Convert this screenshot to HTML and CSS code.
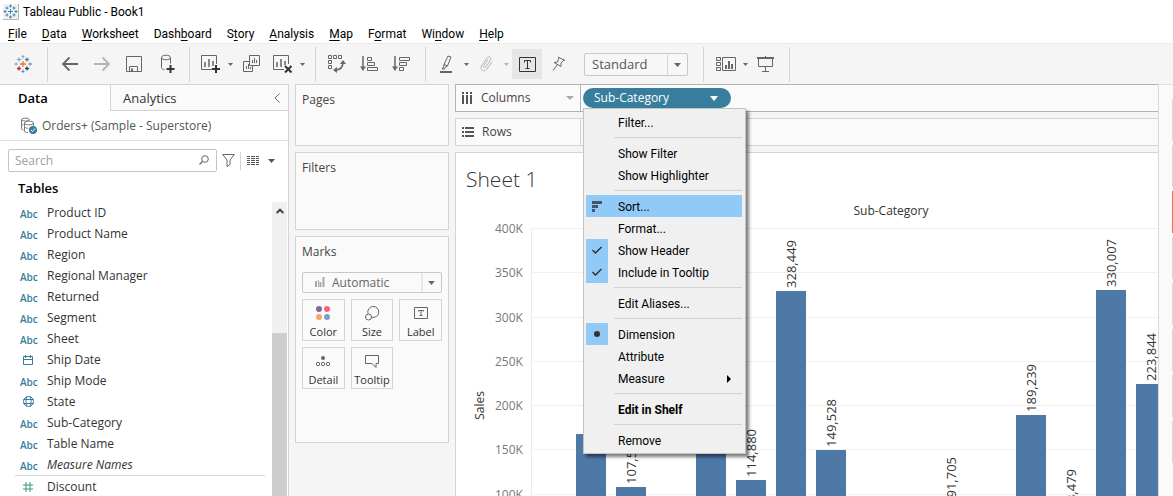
FILE: index.html
```html
<!DOCTYPE html>
<html lang="en">
<head>
<meta charset="utf-8">
<title>Tableau Public - Book1</title>
<link rel="stylesheet" href="styles.css">
</head>
<body>
<div class="app">
  <header class="titlebar">
    <svg class="app-icon" width="16" height="16" viewBox="0 0 16 16"><rect x="0" y="0" width="15" height="15" fill="#f0f0f0"/><path d="M15.500 0v15.500H0" fill="none" stroke="#b5b5b5"/><path d="M7.500 5v5M5 7.500h5M7.500 0.500v3M6 2h3M7.500 11.500v3M6 13h3M2 6v3M0.500 7.500h3M13 6v3M11.500 7.500h3M4 2.500v3M2.500 4h3M11 2.500v3M9.500 4h3M4 9.500v3M2.500 11h3M11 9.500v3M9.500 11h3" fill="none" stroke="#3f86b5"/></svg>
    <span>Tableau Public - Book1</span>
  </header>
  <nav class="menubar">
    <button><u>F</u>ile</button><button><u>D</u>ata</button><button><u>W</u>orksheet</button><button>Dash<u>b</u>oard</button><button>S<u>t</u>ory</button><button><u>A</u>nalysis</button><button><u>M</u>ap</button><button>F<u>o</u>rmat</button><button>Wi<u>n</u>dow</button><button><u>H</u>elp</button>
  </nav>

  <div class="toolbar">
    <div class="tool-group start">
      <button class="tool" aria-label="Start page"><svg width="18" height="18" viewBox="0 0 18 18" fill="none"><path d="M9 6v6M6 9h6" stroke="#e8762d" stroke-width="1.300"/><path d="M5 2.500v4M3 4.500h4" stroke="#6fa3b5"/><path d="M13 2.500v4M11 4.500h4" stroke="#5b7ba0" stroke-width="1.300"/><path d="M5 11.500v4M3 13.500h4" stroke="#c72037" stroke-width="1.300"/><path d="M13 11.500v4M11 13.500h4" stroke="#1f457e" stroke-width="1.300"/><path d="M9 0v3.500M7.500 1.500h3M2 7.500v3M.5 9h3.500" stroke="#7fa7b8"/><path d="M9 14.500V18M7.500 16.500h3M16 7.500v3M14.500 9H18" stroke="#7380a8"/></svg></button>
    </div>
    <div class="tool-group">
      <button class="tool" aria-label="Undo"><svg width="18" height="16" viewBox="0 0 18 16"><path d="M17 8H2M8.500 1.500L2 8l6.500 6.500" fill="none" stroke="#666" stroke-width="1.800"/></svg></button>
      <button class="tool" aria-label="Redo"><svg width="18" height="16" viewBox="0 0 18 16"><path d="M1 8h15M9.500 1.500L16 8l-6.500 6.500" fill="none" stroke="#b5b5b5" stroke-width="1.800"/></svg></button>
      <button class="tool" aria-label="Save"><svg width="16" height="16" viewBox="0 0 16 16" fill="none" stroke="#666"><path d="M.5.500h15v15H.500zM3.500 15v-4.500h8V15" /><path d="M6 12.500v3" stroke-width="2"/></svg></button>
      <button class="tool" aria-label="New data source"><svg width="18" height="20" viewBox="0 0 18 20" fill="none"><path d="M4.500 3.500c0-3 9-3 9 0s-9 3-9 0v10c0 1.500 1.500 2 3 2M13.500 3.500v6" stroke="#666"/><path d="M13.500 11v8M9.500 15h8" stroke="#333" stroke-width="2"/></svg></button>
    </div>
    <div class="tool-group">
      <div class="split"><button class="tool" aria-label="New worksheet"><svg width="20" height="18" viewBox="0 0 20 18" fill="none"><path d="M11 14.500H.5V.500h15V9" stroke="#666"/><path d="M4 7v5M8 4v8M12 6v5" stroke="#666" stroke-width="1.500"/><path d="M15 10v8M11 14h8" stroke="#333" stroke-width="2"/></svg></button><button class="caret" aria-label="New worksheet options"><svg width="5" height="3" viewBox="0 0 5 3"><path d="M0 0h5L2.500 3z" fill="#666"/></svg></button></div>
      <button class="tool" aria-label="Duplicate"><svg width="18" height="18" viewBox="0 0 18 18" fill="none" stroke="#666"><path d="M7.500.500h10v10h-10zM7 6.500H1.500v10h9V11M10.500 8V5M12.500 8V3M14.500 8V5M4.500 14v-3M6.500 14V9M8.500 14v-2"/></svg></button>
      <div class="split"><button class="tool" aria-label="Clear sheet"><svg width="20" height="18" viewBox="0 0 20 18" fill="none"><path d="M11 14.500H.5V.500h15V9" stroke="#666"/><path d="M4 7v5M8 4v8M12 6v4" stroke="#666" stroke-width="1.500"/><path d="M12 11l6.500 6.500M18.500 11L12 17.500" stroke="#333" stroke-width="2"/></svg></button><button class="caret" aria-label="Clear options"><svg width="5" height="3" viewBox="0 0 5 3"><path d="M0 0h5L2.500 3z" fill="#666"/></svg></button></div>
    </div>
    <div class="tool-group">
      <button class="tool" aria-label="Swap rows and columns"><svg width="18" height="18" viewBox="0 0 18 18" fill="none" stroke="#666"><path d="M.5.500h3v3h-3zM5.500.500h3v3h-3zM10.500.500h3v3h-3zM.5 5.500h3v3h-3zM.5 10.500h3v3h-3z"/><path d="M7 15c5 0 8-3 8-8" stroke-width="1.500"/><path d="M12 9l3-4 3 4zM9 12l-4 3 4 3z" fill="#666" stroke="none"/></svg></button>
      <button class="tool" aria-label="Sort ascending"><svg width="18" height="16" viewBox="0 0 18 16" fill="none" stroke="#666"><path d="M3 0v12" stroke-width="1.500"/><path d="M0 10.500h6L3 15z" fill="#666" stroke="none"/><path d="M7.500 1.500h4v3h-4zM7.500 6.500h7v3h-7zM7.500 11.500h10v3h-10z"/></svg></button>
      <button class="tool" aria-label="Sort descending"><svg width="18" height="16" viewBox="0 0 18 16" fill="none" stroke="#666"><path d="M3 0v12" stroke-width="1.500"/><path d="M0 10.500h6L3 15z" fill="#666" stroke="none"/><path d="M7.500 1.500h10v3h-10zM7.500 6.500h7v3h-7zM7.500 11.500h4v3h-4z"/></svg></button>
    </div>
    <div class="tool-group">
      <div class="split"><button class="tool" aria-label="Highlight"><svg width="14" height="18" viewBox="0 0 14 18" fill="none" stroke="#666"><path d="M8 1l3 1-3.500 9-3 2-1-.5L4 9.500zM4 9.500l3.500 1.500M3.500 12L2 14h3"/><path d="M0 17h12" stroke-width="2"/></svg></button><button class="caret" aria-label="Highlight options"><svg width="5" height="3" viewBox="0 0 5 3"><path d="M0 0h5L2.500 3z" fill="#666"/></svg></button></div>
      <div class="split"><button class="tool" aria-label="Group members"><svg width="14" height="16" viewBox="0 0 14 16" fill="none" stroke="#b5b5b5"><path d="M8 3.500L4 9.500c-1 2 1 3 2 1.500L10.500 4c1.500-3-2-4.500-3.500-2L1.500 10c-2 4 3 6.500 5 3.500L12 6"/></svg></button><button class="caret" aria-label="Group options"><svg width="5" height="3" viewBox="0 0 5 3"><path d="M0 0h5L2.500 3z" fill="#b5b5b5"/></svg></button></div>
      <button class="tool pressed" aria-label="Show mark labels" aria-pressed="true"><svg width="17" height="15" viewBox="0 0 17 15" fill="none" stroke="#333"><path d="M.5.500h16v14H.500z"/><path d="M5.500 5.500v-2h6v2M8.500 3.500v8M6.500 11.500h4"/></svg></button>
      <button class="tool" aria-label="Fix axes"><svg width="14" height="16" viewBox="0 0 14 16" fill="none" stroke="#666"><path d="M6 1l7 3.500M7 1.500L5.500 6 2 6.500l7 4L9 7l3-3M5.500 8.500L1 14.500"/></svg></button>
      <div class="select-box fit"><select aria-label="Fit"><option>Standard</option></select><svg class="select-arrow" width="20" height="20" viewBox="0 0 20 20"><path d="M.5 0v20" stroke="#d4d4d4"/><path d="M7 8.500h7l-3.500 4z" fill="#666"/></svg></div>
    </div>
    <div class="tool-group last">
      <div class="split"><button class="tool" aria-label="Show cards"><svg width="20" height="14" viewBox="0 0 20 14" fill="none" stroke="#666"><path d="M.5.500h4v3h-4zM.5 5.500h4v3h-4zM.5 10.500h4v3h-4zM6.500.500h13v13h-13z"/><path d="M10 8v4M13 4v8M16 7v5" stroke-width="2"/></svg></button><button class="caret" aria-label="Card options"><svg width="5" height="3" viewBox="0 0 5 3"><path d="M0 0h5L2.500 3z" fill="#666"/></svg></button></div>
      <button class="tool" aria-label="Presentation mode"><svg width="18" height="16" viewBox="0 0 18 16" fill="none" stroke="#666"><path d="M0 2h17" stroke-width="2"/><path d="M8.500 0v2M1.500 3v7.500h14V3M8.500 10.500v5M5 15.500h7"/></svg></button>
    </div>
  </div>

  <main class="body">
    <aside class="data-pane">
      <div class="tabs" role="tablist">
        <button class="tab active" role="tab" aria-selected="true">Data</button>
        <button class="tab" role="tab" aria-selected="false">Analytics</button>
        <button class="collapse" aria-label="Collapse pane"><svg width="6" height="10" viewBox="0 0 6 10"><path d="M5.500.500L1 5l4.500 4.500" fill="none" stroke="#666"/></svg></button>
      </div>
      <div class="source">
        <svg width="18" height="18" viewBox="0 0 18 18" fill="none" stroke="#777"><path d="M1.500 3c0-2.500 8-2.500 8 0M1.500 3v8c0 1.500 1 2 2 2M1.500 6.500c0 1 1 1.500 2 1.500M9.500 3c-2 1.500-6 1.500-8 0"/><path d="M4.500 6c0-2.500 9-2.500 9 0s-9 2.500-9 0v8c0 1 1.500 1.500 3.500 1.500M13.500 6v3M4.500 10c1 1 2.500 1.300 4 1.200"/><circle cx="13" cy="13" r="4" fill="#377e9d" stroke="none"/><path d="M11 13l1.500 1.500L15 11.500" stroke="#fff"/></svg>
        <span>Orders+ (Sample - Superstore)</span>
      </div>
      <div class="search-row">
        <div class="search"><input type="text" placeholder="Search" aria-label="Search fields"><svg width="10" height="11" viewBox="0 0 10 11" fill="none" stroke="#666"><circle cx="6" cy="4" r="3.300"/><path d="M3.500 6.500L.5 9.500" stroke-width="1.300"/></svg></div>
        <button class="icon-btn" aria-label="Filter fields"><svg width="13" height="13" viewBox="0 0 13 13"><path d="M.700.500h11.600L8 6v4.500L5 12.500V6z" fill="none" stroke="#666"/></svg></button>
        <button class="icon-btn divided" aria-label="View options"><svg width="12" height="10" viewBox="0 0 12 10" stroke="#555"><path d="M0 .500h3M4 .500h4M9 .500h3M0 2.500h3M4 2.500h4M9 2.500h3M0 4.500h3M4 4.500h4M9 4.500h3M0 6.500h3M4 6.500h4M9 6.500h3M0 8.500h3M4 8.500h4M9 8.500h3"/></svg><svg width="7" height="4" viewBox="0 0 7 4"><path d="M0 0h7L3.500 4z" fill="#555"/></svg></button>
      </div>
      <h2 class="tables-title">Tables</h2>
      <div class="fields-area">
        <ul class="fields">
          <li><i class="abc">Abc</i>Product ID</li>
          <li><i class="abc">Abc</i>Product Name</li>
          <li><i class="abc">Abc</i>Region</li>
          <li><i class="abc">Abc</i>Regional Manager</li>
          <li><i class="abc">Abc</i>Returned</li>
          <li><i class="abc">Abc</i>Segment</li>
          <li><i class="abc">Abc</i>Sheet</li>
          <li><i class="glyph"><svg width="10" height="10" viewBox="0 0 10 10" fill="none" stroke="#377e9d"><path d="M.5 1.500h9v8h-9zM.5 4.500h9M2.500 0v3M7.500 0v3"/></svg></i>Ship Date</li>
          <li><i class="abc">Abc</i>Ship Mode</li>
          <li><i class="glyph"><svg width="11" height="11" viewBox="0 0 11 11" fill="none" stroke="#377e9d"><circle cx="5.500" cy="5.500" r="5"/><path d="M.5 3.500h10M.5 7.500h10M4 .500c-1.500 3-1.500 7 0 10M7 .500c1.500 3 1.500 7 0 10"/></svg></i>State</li>
          <li><i class="abc">Abc</i>Sub-Category</li>
          <li><i class="abc">Abc</i>Table Name</li>
          <li class="names"><i class="abc">Abc</i><em>Measure Names</em></li>
          <li><i class="glyph"><svg width="10" height="10" viewBox="0 0 10 10" fill="none" stroke="#3a9a72"><path d="M3 0v10M7 0v10M0 3h10M0 7h10"/></svg></i>Discount</li>
        </ul>
        <div class="scrollbar"><svg width="8" height="6" viewBox="0 0 8 6"><path d="M.700 5L4 1.700 7.300 5" fill="none" stroke="#444" stroke-width="2"/></svg><div class="thumb"></div></div>
      </div>
    </aside>

    <section class="cards">
      <div class="card pages"><h3>Pages</h3></div>
      <div class="card filters"><h3>Filters</h3></div>
      <div class="card marks">
        <h3>Marks</h3>
        <div class="select-box mark-type"><svg class="type-icon" width="10" height="11" viewBox="0 0 10 11" fill="#aaa"><path d="M0 4h2v6H0zM3 3h1v7H3zM4.500 5h2v5h-2zM7.500 0h2v10h-2z"/></svg><select aria-label="Mark type"><option>Automatic</option></select><svg class="select-arrow" width="20" height="20" viewBox="0 0 20 20"><path d="M.5 0v20" stroke="#d4d4d4"/><path d="M7 8.500h7l-3.500 4z" fill="#666"/></svg></div>
        <div class="mark-grid">
          <button><svg width="16" height="16" viewBox="0 0 16 16"><circle cx="4" cy="4" r="3" fill="#7f6a94"/><circle cx="12" cy="4" r="3" fill="#f8637c"/><circle cx="4" cy="12" r="3" fill="#f5a574"/><circle cx="12" cy="12" r="3" fill="#7c9fc9"/></svg>Color</button>
          <button><svg width="16" height="16" viewBox="0 0 16 16" fill="none" stroke="#666"><path d="M4 8.500A5.500 5.500 0 1 1 8 12.300"/><circle cx="4.500" cy="12" r="3"/></svg>Size</button>
          <button><svg width="14" height="16" viewBox="0 0 14 16" fill="none" stroke="#666"><path d="M.5 2.500h13v11H.500zM4.500 6.500v-1h5v1M7 5.500v5M5.500 10.500h3"/></svg>Label</button>
          <button><svg width="16" height="16" viewBox="0 0 16 16" fill="none" stroke="#666"><circle cx="8" cy="5" r="2" fill="#666" stroke="none"/><circle cx="3" cy="11" r="1.700"/><circle cx="8" cy="11" r="1.700"/><circle cx="13" cy="11" r="1.700"/></svg>Detail</button>
          <button><svg width="16" height="16" viewBox="0 0 16 16" fill="none" stroke="#666"><path d="M1.500 2.500h13v8H12v4l-4-4H1.500z"/></svg>Tooltip</button>
        </div>
      </div>
    </section>

    <section class="workspace">
      <div class="shelf columns">
        <div class="shelf-name"><svg width="11" height="12" viewBox="0 0 11 12" fill="#555"><path d="M0 0h2v2H0zM4 0h2v2H4zM8 0h2v2H8zM0 3h2v9H0zM4 3h2v9H4zM8 3h2v9H8z"/></svg><span>Columns</span><svg class="shelf-caret" width="8" height="4" viewBox="0 0 8 4"><path d="M0 0h8L4 4z" fill="#aaa"/></svg></div>
        <div class="shelf-body">
          <button class="pill"><span>Sub-Category</span><svg width="8" height="5" viewBox="0 0 8 5"><path d="M0 0h8L4 5z" fill="#fff"/></svg></button>
          <div class="menu" role="menu">
            <button role="menuitem">Filter...</button>
            <hr>
            <button role="menuitem">Show Filter</button>
            <button role="menuitem">Show Highlighter</button>
            <hr>
            <button role="menuitem" class="hover"><i><svg width="10" height="11" viewBox="0 0 10 11" fill="#45566b"><path d="M0 0h10v3H0zM0 4h6v3H0zM0 8h3v3H0z"/></svg></i>Sort...</button>
            <button role="menuitem">Format...</button>
            <button role="menuitemcheckbox" aria-checked="true"><i class="on"><svg width="10" height="8" viewBox="0 0 10 8"><path d="M.5 4l3 3 6-6" fill="none" stroke="#333" stroke-width="1.500"/></svg></i>Show Header</button>
            <button role="menuitemcheckbox" aria-checked="true"><i class="on"><svg width="10" height="8" viewBox="0 0 10 8"><path d="M.5 4l3 3 6-6" fill="none" stroke="#333" stroke-width="1.500"/></svg></i>Include in Tooltip</button>
            <hr>
            <button role="menuitem">Edit Aliases...</button>
            <hr>
            <button role="menuitemradio" aria-checked="true"><i class="on"><svg width="6" height="6" viewBox="0 0 6 6"><circle cx="3" cy="3" r="3" fill="#333"/></svg></i>Dimension</button>
            <button role="menuitemradio" aria-checked="false">Attribute</button>
            <button role="menuitem" class="sub">Measure<svg width="4" height="8" viewBox="0 0 4 8"><path d="M0 0l4 4-4 4z"/></svg></button>
            <hr>
            <button role="menuitem" class="strong">Edit in Shelf</button>
            <hr>
            <button role="menuitem">Remove</button>
          </div>
        </div>
      </div>
      <div class="shelf">
        <div class="shelf-name"><svg width="12" height="10" viewBox="0 0 12 10" fill="#555"><path d="M0 0h2v2H0zM3 0h9v2H3zM0 4h2v2H0zM3 4h9v2H3zM0 8h2v2H0zM3 8h9v2H3z"/></svg><span>Rows</span></div>
        <div class="shelf-body"></div>
      </div>
      <div class="sheet">
        <h1>Sheet 1</h1>
        <div class="chart">
          <div class="field-title">Sub-Category</div>
          <div class="axis-title"><span>Sales</span></div>
          <div class="ticks"><span>400K</span><span>350K</span><span>300K</span><span>250K</span><span>200K</span><span>150K</span><span>100K</span><span>50K</span></div>
          <div class="plot">
            <div class="grid-lines"><b></b><b></b><b></b><b></b><b></b><b></b><b></b><b></b></div>
            <div class="bars">
              <div class="col"></div>
              <div class="col"><span>167,380</span><div class="bar" style="height:41.850%"></div></div>
              <div class="col"><span>107,532</span><div class="bar" style="height:26.880%"></div></div>
              <div class="col"><div class="bar" style="height:6.780%"></div></div>
              <div class="col"><span>203,413</span><div class="bar" style="height:50.850%"></div></div>
              <div class="col"><span>114,880</span><div class="bar" style="height:28.720%"></div></div>
              <div class="col"><span>328,449</span><div class="bar" style="height:82.110%"></div></div>
              <div class="col"><span>149,528</span><div class="bar" style="height:37.380%"></div></div>
              <div class="col"><div class="bar" style="height:4.120%"></div></div>
              <div class="col"><div class="bar" style="height:0.760%"></div></div>
              <div class="col"><span>91,705</span><div class="bar" style="height:22.930%"></div></div>
              <div class="col"><div class="bar" style="height:3.120%"></div></div>
              <div class="col"><span>189,239</span><div class="bar" style="height:47.310%"></div></div>
              <div class="col"><span>78,479</span><div class="bar" style="height:19.620%"></div></div>
              <div class="col"><span>330,007</span><div class="bar" style="height:82.500%"></div></div>
              <div class="col"><span>223,844</span><div class="bar" style="height:55.960%"></div></div>
              <div class="col"></div>
              <div class="col"></div>
            </div>
          </div>
        </div>
      </div>
    </section>

    <aside class="show-me">
      <div></div><div></div><div class="picked"></div><div></div><div></div><div></div><div></div><div></div>
    </aside>
  </main>
</div>
</body>
</html>
```
FILE: styles.css
```css
* { box-sizing: border-box; }
html, body { height: 100%; margin: 0; }
body {
  font: 13px/16px "Open Sans", "Noto Sans", sans-serif;
  color: #333;
  background: #fff;
  overflow: hidden;
}
button, input, select { font: inherit; color: inherit; margin: 0; padding: 0; border: 0; background: none; }
h1, h2, h3, ul { margin: 0; padding: 0; font-weight: 400; }
ul { list-style: none; }
i { font-style: normal; }
svg { display: block; flex: none; }

.app { display: flex; flex-direction: column; height: 100vh; }

.titlebar {
  display: flex; align-items: center; gap: 4px;
  height: 24px; padding-left: 3px;
  font-family: Roboto, sans-serif; font-size: 12px; color: #000;
}
.menubar {
  display: flex; gap: 15px;
  height: 19px; padding-left: 8px;
  font-family: Roboto, sans-serif; font-size: 12px; color: #000;
}
.menubar u { text-underline-offset: 2px; }

.toolbar {
  display: flex; align-items: center;
  height: 41px; flex: none;
  background: #f5f5f5; border-top: 1px solid #ebebeb;
}
.tool-group {
  display: flex; align-items: center; gap: 2px;
  height: 35px; padding: 0 9px 0 6px;
  border-right: 1px solid #d4d4d4;
}
.tool-group.start { padding: 0 9px 0 8px; }
.tool-group:nth-child(2) { padding: 0 8px 0 7px; }
.tool-group:nth-child(5) { padding-right: 15px; }
.tool-group.last { padding: 0 8px 0 7px; }
.tool { display: flex; align-items: center; justify-content: center; width: 30px; height: 30px; }
.tool.pressed { background: #e6e6e6; }
.split { display: flex; }
.caret { display: flex; align-items: center; justify-content: center; width: 8px; height: 30px; }

.select-box {
  display: flex; align-items: center; position: relative;
  border: 1px solid #c8c8c8; border-radius: 2px; background: #fafafa;
}
.select-box select { flex: 1; height: 100%; appearance: none; outline: 0; }
.select-arrow { position: absolute; right: 0; top: 0; height: 100%; pointer-events: none; }
.fit { width: 104px; height: 23px; margin-left: 8px; background: #f7f7f7; }
.fit select { padding-left: 7px; color: #555; }

.body {
  flex: 1; min-height: 0;
  display: grid; grid-template-columns: 289px 154px 1fr 15px;
  background: #f5f5f5;
}

.data-pane {
  display: flex; flex-direction: column; min-height: 0;
  background: #fff; border-top: 1px solid #d4d4d4; border-right: 1px solid #d4d4d4;
}
.tabs { display: flex; height: 26px; flex: none; }
.tab { flex: none; width: 110px; text-align: left; padding-left: 18px; }
.tab.active { font-weight: 600; color: #000; }
.tab:not(.active) { flex: 1; padding-left: 12px; border-left: 1px solid #d4d4d4; }
.tab:not(.active), .collapse { border-bottom: 1px solid #d4d4d4; background: #fafafa; }
.collapse { padding: 0 8px; }
.source {
  display: flex; align-items: center; gap: 4px;
  height: 30px; flex: none; padding-left: 20px;
  font-size: 12px; color: #555; border-bottom: 1px solid #e0e0e0;
}
.search-row { display: flex; align-items: center; padding: 8px 13px 0 8px; }
.search {
  flex: 1; display: flex; align-items: center;
  height: 23px; padding: 0 7px 0 6px;
  border: 1px solid #c4c4c4; border-radius: 2px;
}
.search input { flex: 1; min-width: 0; outline: 0; font-size: 12px; }
.search input::placeholder { color: #a0a0a0; opacity: 1; }
.icon-btn { display: flex; align-items: center; gap: 9px; height: 18px; margin-left: 5px; }
.icon-btn.divided { padding-left: 6px; border-left: 1px solid #d4d4d4; }
.tables-title { padding: 8px 0 6px 18px; font-size: 13px; font-weight: 600; color: #000; }
.fields-area { flex: 1; min-height: 0; display: flex; justify-content: space-between; overflow: hidden; }
.fields { width: 250px; margin-left: 15px; }
.fields li { display: flex; align-items: center; height: 21px; font-size: 12px; }
.fields i { width: 32px; padding-left: 5px; }
.fields .abc { font-size: 10px; font-weight: 600; color: #377e9d; padding-top: 2px; }
.fields .glyph { padding-left: 8px; }
.fields .names { height: 22px; border-bottom: 1px solid #d8d8d8; }
.fields em { font-style: italic; }
.scrollbar { display: flex; flex-direction: column; align-items: center; width: 15px; margin-right: 1px; padding-top: 6px; background: #f0f0f0; }
.thumb { width: 100%; flex: 1; margin-top: 119px; background: #cdcdcd; }

.cards { display: flex; flex-direction: column; gap: 6px; margin: 0 0 0 6px; width: 154px; font-size: 12px; }
.card { padding: 7px 6px; border: 1px solid #d4d4d4; background: #fafafa; }
.card h3 { font-size: 12px; color: #444; }
.pages { height: 62px; }
.filters { height: 78px; }
.marks { height: 207px; }
.mark-type { height: 21px; margin-top: 12px; color: #666; }
.type-icon { margin: 0 7px 0 12px; }
.mark-grid { display: grid; grid-template-columns: repeat(3, 1fr); gap: 6px; margin-top: 6px; }
.mark-grid button {
  display: flex; flex-direction: column; align-items: center; gap: 3px;
  height: 42px; padding-top: 5px;
  border: 1px solid #d4d4d4; background: #fafafa; font-size: 11px; white-space: nowrap;
}

.workspace { display: flex; flex-direction: column; gap: 6px; min-width: 0; min-height: 0; margin-left: 12px; font-size: 12px; }
.shelf { display: flex; height: 28px; flex: none; background: #fafafa; border: 1px solid #d4d4d4; border-right-width: 0; }
.shelf.columns { border-color: #b3b3b3; }
.shelf-name { display: flex; align-items: center; width: 125px; padding: 0 6px; border-right: 1px solid; border-color: inherit; color: #444; }
.shelf-name span { margin: 0 auto 0 8px; }
.shelf-body { flex: 1; position: relative; padding: 3px 2px; }
.pill {
  display: flex; align-items: center; justify-content: space-between;
  width: 148px; height: 20px; padding: 0 13px 0 11px;
  border-radius: 10px; background: #377e9d; color: #fff; font-weight: 500;
}
.menu {
  position: absolute; z-index: 2; left: 2px; top: 23px;
  width: 163px; padding: 2px 3px 2px 2px;
  background: #f0f0f0; border: 1px solid #c4c4c4;
  box-shadow: 3px 3px 3px rgba(0, 0, 0, .5);
  font-family: Roboto, sans-serif; font-size: 12px; color: #000;
}
.menu button { display: flex; align-items: center; position: relative; width: 100%; height: 22px; padding-top: 1px; padding-left: 32px; }
.menu i { position: absolute; left: 0; top: 0; display: flex; align-items: center; justify-content: center; width: 22px; height: 22px; }
.menu .on, .menu .hover { background: #91c9f7; }
.menu .sub { justify-content: space-between; padding-right: 11px; }
.menu .strong { font-weight: 700; }
.menu hr { height: 1px; margin: 4px 0 4px 28px; border: 0; background: #d2d2d2; }

.sheet { flex: 1; min-height: 0; overflow: hidden; padding: 14px 0 0 10px; background: #fff; border: 1px solid #d4d4d4; border-width: 1px 0 0 1px; }
.sheet h1 { font-size: 21px; line-height: 24px; font-weight: 300; color: #333; }
.chart { display: grid; grid-template-columns: 28px 37px 720px; grid-template-rows: 37px 354px; }
.field-title { grid-column: 3; text-align: center; padding-top: 12px; }
.axis-title { grid-column: 1; display: flex; align-items: center; justify-content: center; }
.axis-title span { writing-mode: vertical-rl; transform: rotate(180deg); font-weight: 500; }
.ticks, .grid-lines { display: grid; grid-template-rows: repeat(8, 1fr); }
.ticks { color: #787878; padding-left: 1px; }
.ticks span { margin-top: -7px; }
.plot { position: relative; box-shadow: inset 1px 0 #ececec; }
.grid-lines { position: absolute; inset: 0; }
.grid-lines b { border-top: 1px solid #f0f0f0; }
.bars { position: relative; display: flex; height: 100%; }
.col { flex: 1; display: flex; flex-direction: column; align-items: center; justify-content: flex-end; gap: 3px; }
.col span { writing-mode: vertical-rl; transform: rotate(180deg); font-size: 13px; }
.bar { flex: none; width: 30px; background: #4e79a7; }

.show-me { display: flex; flex-direction: column; align-items: flex-end; gap: 4px; padding-top: 14px; background: #fafafa; border-left: 1px solid #d9d9d9; border-top: 1px solid #e0e0e0; }
.show-me div { width: 1px; height: 42px; flex: none; background: #d9d9d9; }
.show-me .picked { background: #e8703a; }
```
